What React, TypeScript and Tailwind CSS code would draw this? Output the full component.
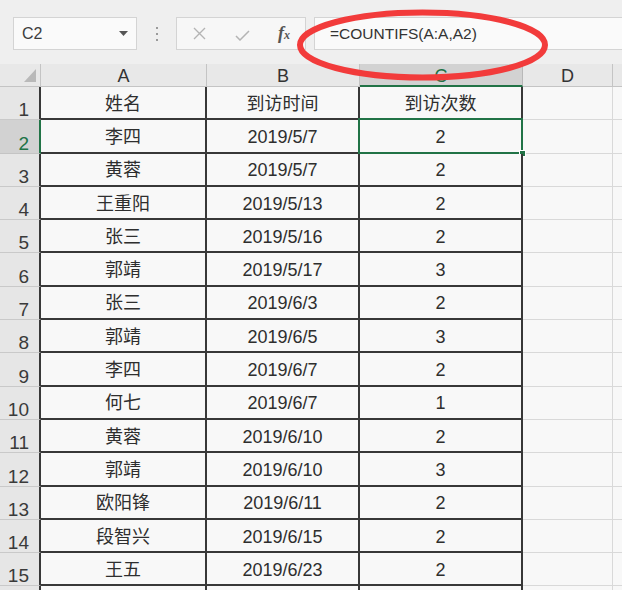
import React from "react";

const rows: [string, string, string][] = [
  ["姓名", "到访时间", "到访次数"],
  ["李四", "2019/5/7", "2"],
  ["黄蓉", "2019/5/7", "2"],
  ["王重阳", "2019/5/13", "2"],
  ["张三", "2019/5/16", "2"],
  ["郭靖", "2019/5/17", "3"],
  ["张三", "2019/6/3", "2"],
  ["郭靖", "2019/6/5", "3"],
  ["李四", "2019/6/7", "2"],
  ["何七", "2019/6/7", "1"],
  ["黄蓉", "2019/6/10", "2"],
  ["郭靖", "2019/6/10", "3"],
  ["欧阳锋", "2019/6/11", "2"],
  ["段智兴", "2019/6/15", "2"],
  ["王五", "2019/6/23", "2"],
  ["", "", ""],
];

const font = { fontFamily: '"Liberation Sans", "Noto Sans CJK SC", sans-serif' };

const cellBase =
  "flex items-center justify-center pt-[3px] text-[18px] text-[#2e2e2e] border-r-2 border-b-2 border-[#383838] bg-[#f8f8f8]";

function Toolbar() {
  return (
    <div className="flex h-[64px] items-start bg-[#efefef] pt-[17px]">
      <div className="ml-[13px] flex h-[33px] w-[124px] items-center justify-between border border-[#d4d4d4] bg-[#fafafa] pl-[8px] pr-[8px]">
        <span className="text-[16px] text-[#3c3c3c]">C2</span>
        <svg width="9" height="5" viewBox="0 0 9 5">
          <path d="M0 0h9L4.5 5z" fill="#555" />
        </svg>
      </div>
      <div className="flex h-[33px] w-[39px] flex-col items-center justify-center gap-[4px]">
        <span className="h-[2px] w-[2px] bg-[#9a9a9a]" />
        <span className="h-[2px] w-[2px] bg-[#9a9a9a]" />
        <span className="h-[2px] w-[2px] bg-[#9a9a9a]" />
      </div>
      <div className="flex h-[33px] w-[130px] items-center border border-[#d4d4d4] bg-[#f7f7f7]">
        <svg className="ml-[16px]" width="13" height="13" viewBox="0 0 13 13">
          <path d="M1 1l11 11M12 1L1 12" stroke="#b4b4b4" strokeWidth="1.4" />
        </svg>
        <svg className="ml-[29px] mt-[3px]" width="15" height="11" viewBox="0 0 15 11">
          <path d="M1 6l4 4 9-9" stroke="#b4b4b4" strokeWidth="1.5" fill="none" />
        </svg>
        <span
          className="ml-[28px] text-[18px] font-bold italic text-[#555]"
          style={{ fontFamily: '"Liberation Serif", serif' }}
        >
          f<span className="text-[12px]">x</span>
        </span>
      </div>
      <div className="ml-[8px] flex h-[33px] flex-1 items-center border border-r-0 border-[#d4d4d4] bg-[#fafafa] pl-[15px]">
        <span className="text-[15.5px] text-[#333]">=COUNTIFS(A:A,A2)</span>
      </div>
    </div>
  );
}

export default function App() {
  return (
    <div className="relative h-[590px] w-[622px] overflow-hidden bg-[#f8f8f8]" style={font}>
      <Toolbar />
      <div className="grid grid-cols-[41px_166px_153px_163px_90px_1fr]">
        <div className="relative h-[23px] border-r border-b border-[#c4c4c4] bg-[#e8e8e8]">
          <svg className="absolute right-[4px] bottom-[4px]" width="12" height="13" viewBox="0 0 12 13">
            <path d="M12 0v13H0z" fill="#b9b9b9" />
          </svg>
        </div>
        {["A", "B"].map((c) => (
          <div
            key={c}
            className="flex h-[23px] items-center justify-center border-r border-b border-[#c4c4c4] bg-[#e8e8e8] pt-[2px] text-[18px] text-[#333]"
          >
            {c}
          </div>
        ))}
        <div className="flex h-[23px] items-center justify-center border-r border-b-2 border-r-[#b8b8b8] border-b-[#217346] bg-[#d2d2d2] pt-[3px] text-[18px] text-[#217346]">
          C
        </div>
        <div className="flex h-[23px] items-center justify-center border-r border-b border-[#c4c4c4] bg-[#e8e8e8] pt-[2px] text-[18px] text-[#333]">
          D
        </div>
        <div className="h-[23px] border-b border-[#c4c4c4] bg-[#e8e8e8]" />

        {rows.map((r, i) => {
          const n = i + 1;
          const selected = n === 2;
          return (
            <React.Fragment key={n}>
              <div
                className={
                  selected
                    ? "flex h-[33.3px] items-end justify-end border-r-2 border-b border-r-[#217346] border-b-[#c4c4c4] bg-[#d2d2d2] pr-[10px] text-[19px] leading-none text-[#217346]"
                    : "flex h-[33.3px] items-end justify-end border-r-2 border-b border-r-[#383838] border-b-[#c9c9c9] bg-[#e6e6e6] pr-[10px] text-[19px] leading-none text-[#3a3a3a]"
                }
              >
                {n < 16 ? n : ""}
              </div>
              <div className={cellBase + " h-[33.3px]"}>{r[0]}</div>
              <div className={cellBase + " h-[33.3px]"}>{r[1]}</div>
              <div className={cellBase + " relative h-[33.3px]"}>
                {r[2]}
                {selected && (
                  <div className="absolute -top-[2px] -left-[2px] -right-[2px] -bottom-[2px] border-2 border-[#217346]">
                    <span className="absolute -right-[5px] -bottom-[5px] h-[7px] w-[7px] border border-white bg-[#217346]" />
                  </div>
                )}
              </div>
              <div className="h-[33.3px] border-r border-b border-[#d9d9d9] bg-[#f8f8f8]" />
              <div className="h-[33.3px] border-b border-[#d9d9d9] bg-[#f8f8f8]" />
            </React.Fragment>
          );
        })}
      </div>
      <svg className="pointer-events-none absolute top-0 left-0" width="622" height="100">
        <ellipse cx="422.5" cy="45" rx="122.5" ry="32.5" fill="none" stroke="#f23b3b" strokeWidth="6" />
      </svg>
    </div>
  );
}
